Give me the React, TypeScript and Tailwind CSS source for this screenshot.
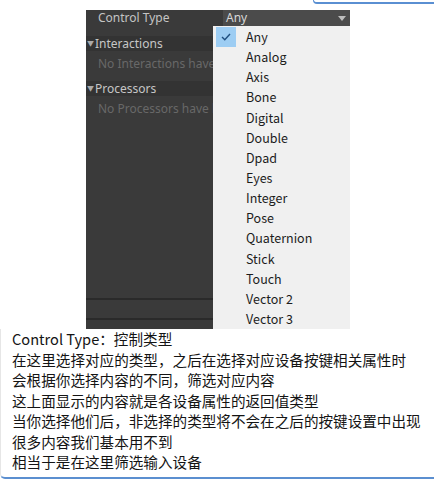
import React from 'react';

const types = [
  'Any', 'Analog', 'Axis', 'Bone', 'Digital', 'Double', 'Dpad', 'Eyes',
  'Integer', 'Pose', 'Quaternion', 'Stick', 'Touch', 'Vector 2', 'Vector 3',
];

const notes = [
  'Control Type：控制类型',
  '在这里选择对应的类型，之后在选择对应设备按键相关属性时',
  '会根据你选择内容的不同，筛选对应内容',
  '这上面显示的内容就是各设备属性的返回值类型',
  '当你选择他们后，非选择的类型将不会在之后的按键设置中出现',
  '很多内容我们基本用不到',
  '相当于是在这里筛选输入设备',
];

// only the part left of the open menu is visible
const Foldout = ({ title, empty }: { title: string; empty: string }) => (
  <div>
    <div className="flex items-center w-[127px] h-[15px] bg-[#333333] text-[#c6c6c6] text-[12px] leading-[15px]">
      <span className="text-[7px] text-[#aaaaaa] w-[9px] pl-[1px]">▼</span>
      <span>{title}</span>
    </div>
    <div className="w-[127px] h-[30px] pl-[12px] pt-[5px] text-[12px] leading-[16px] text-[#686868] whitespace-nowrap overflow-hidden">
      {empty}
    </div>
  </div>
);

const App = () => {
  return (
    <div
      className="w-[434px] h-[491px] bg-white overflow-hidden"
      style={{ fontFamily: '"Noto Sans", "Noto Sans CJK SC", sans-serif' }}
    >
      {/* fragment of box above */}
      <div className="h-[4px] flex justify-end">
        <div className="w-[121px] h-[4px] border-b-[2px] border-l-[1px] border-[#5a8fd2] rounded-bl-[5px]" />
      </div>

      {/* inspector panel */}
      <div className="relative ml-[86px] mt-[6px] w-[264px] h-[319px] bg-[#3a3a3a]">
        <div className="flex h-[16px] items-center">
          <div className="w-[137px] pl-[12px] text-[12px] leading-[16px] text-[#c4c4c4]">Control Type</div>
          <div className="flex-1 h-[16px] flex items-center justify-between bg-[#4b4b4b] pl-[3px] pr-[4px] text-[12px] leading-[16px] text-[#d8d8d8]">
            <span>Any</span>
            <svg width="8" height="5" viewBox="0 0 8 5">
              <path d="M0 0 L8 0 L4 5 Z" fill="#bdbdbd" />
            </svg>
          </div>
        </div>
        <div className="h-[10px]" />
        <Foldout title="Interactions" empty="No Interactions have been added." />
        <Foldout title="Processors" empty="No Processors have been added." />

        <div className="absolute left-0 w-[127px] top-[288px] h-[2px] bg-[#2a2a2a]" />
        <div className="absolute left-0 w-[127px] top-[308px] h-[2px] bg-[#2a2a2a]" />

        {/* dropdown menu */}
        <div className="absolute left-[127px] top-[16px] w-[137px] h-[303px] bg-[#f0f0f0] pt-[1px]">
          {types.map((t, i) => (
            <div key={t} className="flex items-center h-[20.15px] overflow-hidden">
              <div className="w-[33px] h-full flex items-center pl-[3px]">
                {i === 0 && (
                  <div className="w-[20px] h-[20px] bg-[#9dcdf3] flex items-center justify-center">
                    <svg width="10" height="8" viewBox="0 0 10 8">
                      <path d="M1 4 L3.8 6.8 L9 1" fill="none" stroke="#1f4f80" strokeWidth="1.4" />
                    </svg>
                  </div>
                )}
              </div>
              <span
                className="text-[12.5px] leading-[18px] text-[#1c1c1c]"
                style={{ fontFamily: '"Noto Sans CJK SC", sans-serif' }}
              >
                {t}
              </span>
            </div>
          ))}
        </div>
      </div>

      {/* notes */}
      <div
        className="w-[434px] h-[150px] border-l-[1px] border-b-[2px] border-l-[#e6e6e6] border-b-[#5b8fd0] rounded-bl-[5px] pl-[11px]"
        style={{ fontFamily: '"Noto Sans CJK SC", sans-serif' }}
      >
        {notes.map((n) => (
          <div key={n} className="text-[14.6px] leading-[20.5px] text-[#141414] whitespace-nowrap">
            {n}
          </div>
        ))}
      </div>
    </div>
  );
};

export default App;
